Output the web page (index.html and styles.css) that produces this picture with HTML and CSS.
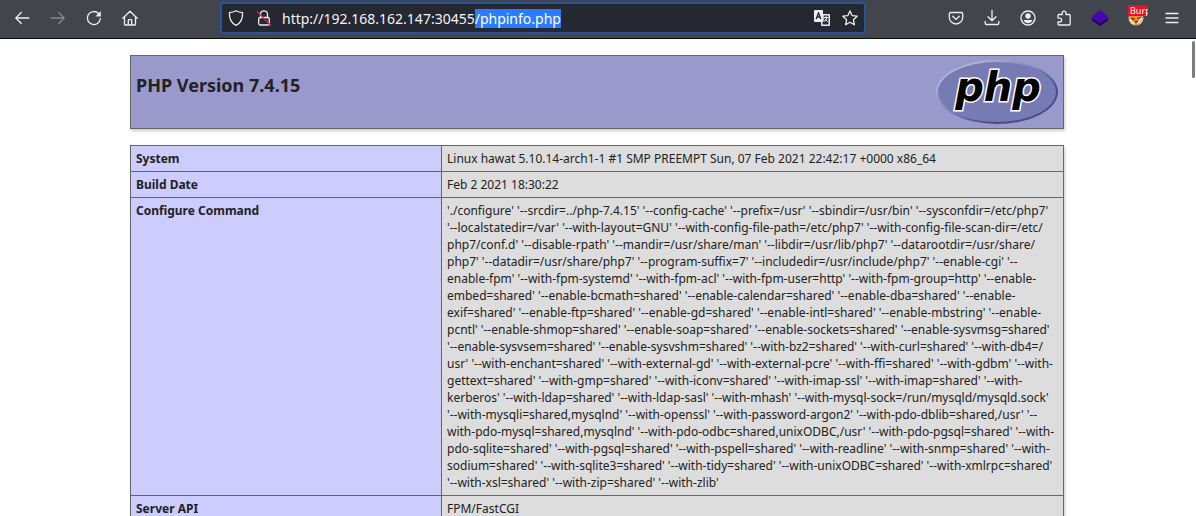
FILE: index.html
```html
<!DOCTYPE html>
<html lang="en">
<head>
<meta charset="utf-8">
<title>PHP 7.4.15 - phpinfo()</title>
<link rel="stylesheet" href="styles.css">
</head>
<body>
<header class="toolbar">
  <nav class="tools">
    <button class="tool" aria-label="Back"><svg viewBox="0 0 16 16"><path d="M15 8H1.800M7.300 2.500 1.800 8l5.500 5.500"/></svg></button>
    <button class="tool dim" aria-label="Forward" disabled><svg viewBox="0 0 16 16"><path d="M1 8h13.200M8.700 2.500 14.200 8l-5.500 5.500"/></svg></button>
    <button class="tool" aria-label="Reload"><svg viewBox="0 0 16 16"><path d="M14.300 8.500A6.500 6.500 0 1 1 12.500 3.500"/><path class="solid" d="M14.800 1v5.500H9.300z"/></svg></button>
    <button class="tool" aria-label="Home"><svg viewBox="0 0 16 16"><path d="M.800 8.200 8 1.200l7.200 7M2.500 7v7.300q0 .7.7.7h9.600q.7 0 .7-.7V7M6.300 15v-4.500q0-.8.8-.8h1.800q.8 0 .8.800V15"/></svg></button>
  </nav>
  <div class="address">
    <button class="tool" aria-label="Tracking protection"><svg viewBox="0 0 16 16"><path d="M8 .800c2 1.200 4.200 1.700 6.600 1.900C14.800 8.500 13 13 8 15.300 3 13 1.200 8.500 1.400 2.700 3.800 2.500 6 2 8 .800z"/></svg></button>
    <button class="tool" aria-label="Connection not secure"><svg viewBox="0 0 16 16"><path d="M4.500 7.500V4.300a3.500 3.500 0 0 1 7 0v3.200"/><rect x="2.700" y="7.500" width="10.600" height="7.500" rx="1.500"/><path class="slash" d="M1.500 2 14.800 15.300"/></svg></button>
    <input class="url" id="url" type="text" aria-label="Address" value="http://192.168.162.147:30455/phpinfo.php" spellcheck="false" autofocus>
    <button class="tool" aria-label="Translate page"><svg viewBox="0 0 16 16"><path class="solid" d="M1 0h7q1 0 1 1v3h6q1 0 1 1v10q0 1-1 1H8q-1 0-1-1v-3H1q-1 0-1-1V1q0-1 1-1z"/><path class="cut" d="M2.300 8.700 4.500 2.700l2.200 6M3 7h3"/><path class="hole" d="M9.700 5.500h4.800v9H8.500V12l1.200-1z"/><path class="thin" d="M10 7.500h4M12 6.500v1M13.200 7.500Q12.500 10.500 10 11.500M11 9l2.500 2.500"/></svg></button>
    <button class="tool" aria-label="Bookmark this page"><svg viewBox="0 0 16 16"><path d="m8 .900 2.100 4.700 5.100.600-3.800 3.500 1 5.100L8 12.300l-4.400 2.500 1-5.100L.800 6.200l5.100-.6z"/></svg></button>
  </div>
  <div class="tools">
    <button class="tool" aria-label="Pocket"><svg viewBox="0 0 16 16"><path d="M2.800 2.500h10.400q1.500 0 1.500 1.500v3.300a6.700 6.700 0 0 1-13.400 0V4q0-1.500 1.500-1.500z"/><path d="M4.700 6.200 8 9.400l3.300-3.200"/></svg></button>
    <button class="tool" aria-label="Downloads"><svg viewBox="0 0 16 16"><path d="M8 .500v10M4 6.700l4 4 4-4M1.200 11.500v1.800q0 1.200 1.200 1.200h11.200q1.200 0 1.200-1.200v-1.800"/></svg></button>
    <button class="tool" aria-label="Account"><svg viewBox="0 0 16 16"><circle cx="8" cy="8" r="7"/><circle class="solid" cx="8" cy="6" r="2.700"/><path class="solid" d="M3.500 10h9q-1.500 3.300-4.500 3.300T3.500 10z"/></svg></button>
    <button class="tool" aria-label="Extensions"><svg viewBox="0 0 16 16"><path d="M2 8V5.500q0-1 1-1h3.200V3a1.900 1.900 0 0 1 3.800 0v1.500h3.200q1 0 1 1V14q0 1-1 1H3q-1 0-1-1v-2h1.700a1.900 1.900 0 0 0 0-3.900z"/></svg></button>
    <button class="tool" aria-label="Wappalyzer"><svg viewBox="0 0 16 16"><path fill="#21006b" stroke="none" d="M0 7.500 8 13l8-5.500v3L8 16l-8-5.500z"/><path fill="#4608ad" stroke="none" d="m8 0 8 6.500v1L8 13 0 7.500v-1z"/></svg></button>
    <button class="tool" aria-label="FoxyProxy">
      <svg viewBox="0 0 16 16"><circle cx="8" cy="8" r="7.500" fill="#c9c5bf" stroke="none"/><path fill="#ef8a2c" stroke="none" d="M1 4h14l-1 6-4 5H7l-5-3z"/><path stroke="#fff" d="m2 10 4 4M13.500 8.500 10 13"/><path stroke="#51331d" d="M4 8.500l2 .5M12 7.500l-2 1M7.500 11.500h2"/></svg>
      <span class="badge">Burp</span>
    </button>
    <button class="tool" aria-label="Menu"><svg viewBox="0 0 16 16"><path d="M2 3.500h12M2 8h12M2 12.500h12"/></svg></button>
  </div>
</header>
<main class="page">
  <div class="center">
    <div class="banner">
      <h1 class="title">PHP Version 7.4.15</h1>
      <a class="logo" href="http://www.php.net/" aria-label="PHP logo">
        <svg viewBox="0 0 122 64">
          <defs>
            <linearGradient id="rim" x1="0" y1="0" x2="1" y2="1">
              <stop offset="0.200" stop-color="#aeb2d5"/>
              <stop offset="0.500" stop-color="#777bb3"/>
              <stop offset="0.700" stop-color="#484c89"/>
            </linearGradient>
          </defs>
          <ellipse cx="61" cy="32" rx="61" ry="32" fill="url(#rim)"/>
          <ellipse cx="61" cy="32" rx="59" ry="30" fill="#777bb3"/>
          <text class="wordmark" x="62" y="41" text-anchor="middle">php</text>
        </svg>
      </a>
    </div>
    <table class="info">
      <tbody>
        <tr><th scope="row">System</th><td>Linux hawat 5.10.14-arch1-1 #1 SMP PREEMPT Sun, 07 Feb 2021 22:42:17 +0000 x86_64</td></tr>
        <tr><th scope="row">Build Date</th><td>Feb 2 2021 18:30:22</td></tr>
        <tr><th scope="row">Configure Command</th><td>'./configure' '--srcdir=../php-7.4.15' '--config-cache' '--prefix=/usr' '--sbindir=/usr/bin' '--sysconfdir=/etc/php7'<br>
'--localstatedir=/var' '--with-layout=GNU' '--with-config-file-path=/etc/php7' '--with-config-file-scan-dir=/etc/<br>
php7/conf.d' '--disable-rpath' '--mandir=/usr/share/man' '--libdir=/usr/lib/php7' '--datarootdir=/usr/share/<br>
php7' '--datadir=/usr/share/php7' '--program-suffix=7' '--includedir=/usr/include/php7' '--enable-cgi' '--<br>
enable-fpm' '--with-fpm-systemd' '--with-fpm-acl' '--with-fpm-user=http' '--with-fpm-group=http' '--enable-<br>
embed=shared' '--enable-bcmath=shared' '--enable-calendar=shared' '--enable-dba=shared' '--enable-<br>
exif=shared' '--enable-ftp=shared' '--enable-gd=shared' '--enable-intl=shared' '--enable-mbstring' '--enable-<br>
pcntl' '--enable-shmop=shared' '--enable-soap=shared' '--enable-sockets=shared' '--enable-sysvmsg=shared'<br>
'--enable-sysvsem=shared' '--enable-sysvshm=shared' '--with-bz2=shared' '--with-curl=shared' '--with-db4=/<br>
usr' '--with-enchant=shared' '--with-external-gd' '--with-external-pcre' '--with-ffi=shared' '--with-gdbm' '--with-<br>
gettext=shared' '--with-gmp=shared' '--with-iconv=shared' '--with-imap-ssl' '--with-imap=shared' '--with-<br>
kerberos' '--with-ldap=shared' '--with-ldap-sasl' '--with-mhash' '--with-mysql-sock=/run/mysqld/mysqld.sock'<br>
'--with-mysqli=shared,mysqlnd' '--with-openssl' '--with-password-argon2' '--with-pdo-dblib=shared,/usr' '--<br>
with-pdo-mysql=shared,mysqlnd' '--with-pdo-odbc=shared,unixODBC,/usr' '--with-pdo-pgsql=shared' '--with-<br>
pdo-sqlite=shared' '--with-pgsql=shared' '--with-pspell=shared' '--with-readline' '--with-snmp=shared' '--with-<br>
sodium=shared' '--with-sqlite3=shared' '--with-tidy=shared' '--with-unixODBC=shared' '--with-xmlrpc=shared'<br>
'--with-xsl=shared' '--with-zip=shared' '--with-zlib'</td></tr>
        <tr><th scope="row">Server API</th><td>FPM/FastCGI</td></tr>
      </tbody>
    </table>
  </div>
  <div class="scroll-thumb"></div>
</main>
<script src="script.js"></script>
</body>
</html>
```

FILE: styles.css
```css
* {
  box-sizing: border-box;
}

body {
  margin: 0;
  height: 100vh;
  display: flex;
  flex-direction: column;
  overflow: hidden;
  background: #fff;
  color: #222;
  font-family: "Noto Sans", sans-serif;
  font-size: 12px;
  line-height: 17px;
}

/* Browser toolbar */
.toolbar {
  flex: none;
  display: flex;
  align-items: center;
  padding: 2px 16px 4px 14px;
  background: #42454c;
  border-bottom: 1px solid #0c0c0d;
}

.tools {
  display: flex;
  gap: 20px;
}

.tool {
  position: relative;
  flex: none;
  display: block;
  width: 16px;
  height: 16px;
  padding: 0;
  border: 0;
  background: none;
  color: #eeeef0;
}

.tool svg {
  display: block;
  width: 16px;
  height: 16px;
  overflow: visible;
  fill: none;
  stroke: currentColor;
  stroke-width: 1.3;
  stroke-linecap: round;
  stroke-linejoin: round;
}

.dim {
  color: #85878b;
}

.tool .solid {
  fill: currentColor;
  stroke: none;
}

.tool .slash {
  stroke: #e22850;
}

.tool .cut {
  stroke: #252731;
}

.tool .hole {
  fill: #252731;
  stroke: none;
}

.tool .thin {
  stroke-width: 1;
}

.badge {
  position: absolute;
  left: 0;
  top: -5px;
  width: 20px;
  height: 11px;
  overflow: hidden;
  background: #e2141f;
  color: #fff;
  font-family: "Noto Sans", sans-serif;
  font-size: 9px;
  line-height: 11px;
  text-align: left;
  padding-left: 2px;
}

.address {
  flex: 1;
  min-width: 0;
  display: flex;
  align-items: center;
  gap: 12px;
  margin: 0 82px;
  padding: 0 6px;
  border: 2px solid #28539f;
  border-radius: 4px;
  background: #252731;
}

.url {
  flex: 1;
  min-width: 0;
  height: 28px;
  margin-left: -2px;
  padding: 0;
  border: 0;
  outline: 0;
  background: none;
  color: #f4f4f6;
  caret-color: transparent;
  font-family: "Noto Sans", sans-serif;
  font-size: 14px;
}

.url::selection {
  background: #2a7bfd;
  color: #fff;
}

/* phpinfo document */
.page {
  position: relative;
  flex: 1;
  min-height: 0;
  overflow: hidden;
  padding: 16px 2px 0 0;
}

.center {
  max-width: 934px;
  margin: 0 auto;
}

.banner {
  display: flex;
  justify-content: space-between;
  align-items: flex-start;
  margin-bottom: 16px;
  padding: 4px 5px;
  border: 1px solid #666;
  background: #99c;
  box-shadow: 1px 2px 3px #ccc;
}

.title {
  margin: 13px 0 0;
  font-size: 18px;
  line-height: 25px;
}

.logo svg {
  display: block;
  width: 122px;
  height: 64px;
}

.wordmark {
  font-family: "DejaVu Sans", sans-serif;
  font-size: 40px;
  font-weight: bold;
  font-style: italic;
  fill: #000;
  stroke: #fff;
  stroke-width: 3px;
  paint-order: stroke;
}

.info {
  width: 100%;
  border-collapse: collapse;
  box-shadow: 1px 2px 3px #ccc;
}

.info th,
.info td {
  padding: 4px 5px;
  border: 1px solid #666;
  vertical-align: top;
  text-align: left;
}

.info th {
  width: 311px;
  background: #ccf;
}

.info td {
  background: #ddd;
  white-space: nowrap;
}

.scroll-thumb {
  position: absolute;
  top: 2px;
  right: 1px;
  width: 3px;
  height: 37px;
  border-radius: 2px;
  background: #7b7d7e;
}
```

FILE: script.js
```js
const url = document.getElementById("url");
url.focus();
url.setSelectionRange(url.value.indexOf("/phpinfo"), url.value.length);
```
